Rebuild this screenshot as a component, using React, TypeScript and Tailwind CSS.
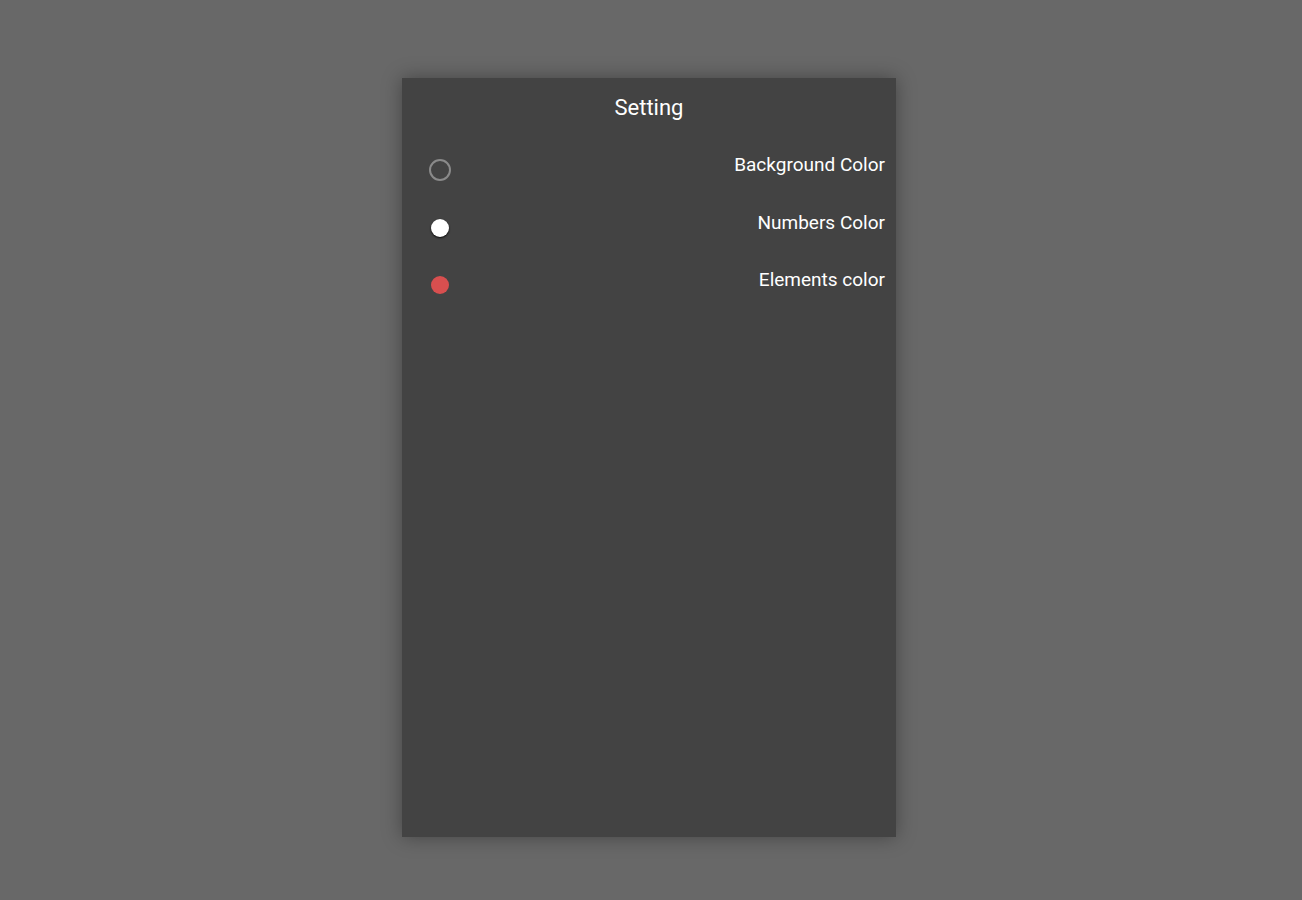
const rows = [
  { label: 'Background Color', swatch: 'w-[22px] h-[22px] rounded-full border-2 border-[#8a8a8a] bg-transparent' },
  { label: 'Numbers Color', swatch: 'w-[18px] h-[18px] rounded-full bg-white shadow-[0_1px_2px_rgba(0,0,0,0.9)]' },
  { label: 'Elements color', swatch: 'w-[18px] h-[18px] rounded-full bg-[#d84f4f]' },
]

export default function App() {
  return (
    <div className="w-full h-[900px] bg-[#686868] flex justify-center pt-[78px] pr-[4px] font-['Roboto',sans-serif]">
      <div className="w-[494px] h-[759px] bg-[#434343] shadow-[0_0_18px_rgba(0,0,0,0.35)] flex flex-col">
        <h1 className="text-center text-[22px] text-white pt-[16px] leading-[28px]">Setting</h1>
        <div className="flex flex-col gap-[35.5px] mt-[38px]">
          {rows.map((r) => (
            <div key={r.label} className="flex items-start justify-between pl-[26px] pr-[11px] h-[22px]">
              <div className="w-[24px] h-[24px] flex items-center justify-center mt-[-2px]">
                <div className={r.swatch} />
              </div>
              <span className="text-[19px] text-white leading-[22px] mt-[-6px]">{r.label}</span>
            </div>
          ))}
        </div>
      </div>
    </div>
  )
}
